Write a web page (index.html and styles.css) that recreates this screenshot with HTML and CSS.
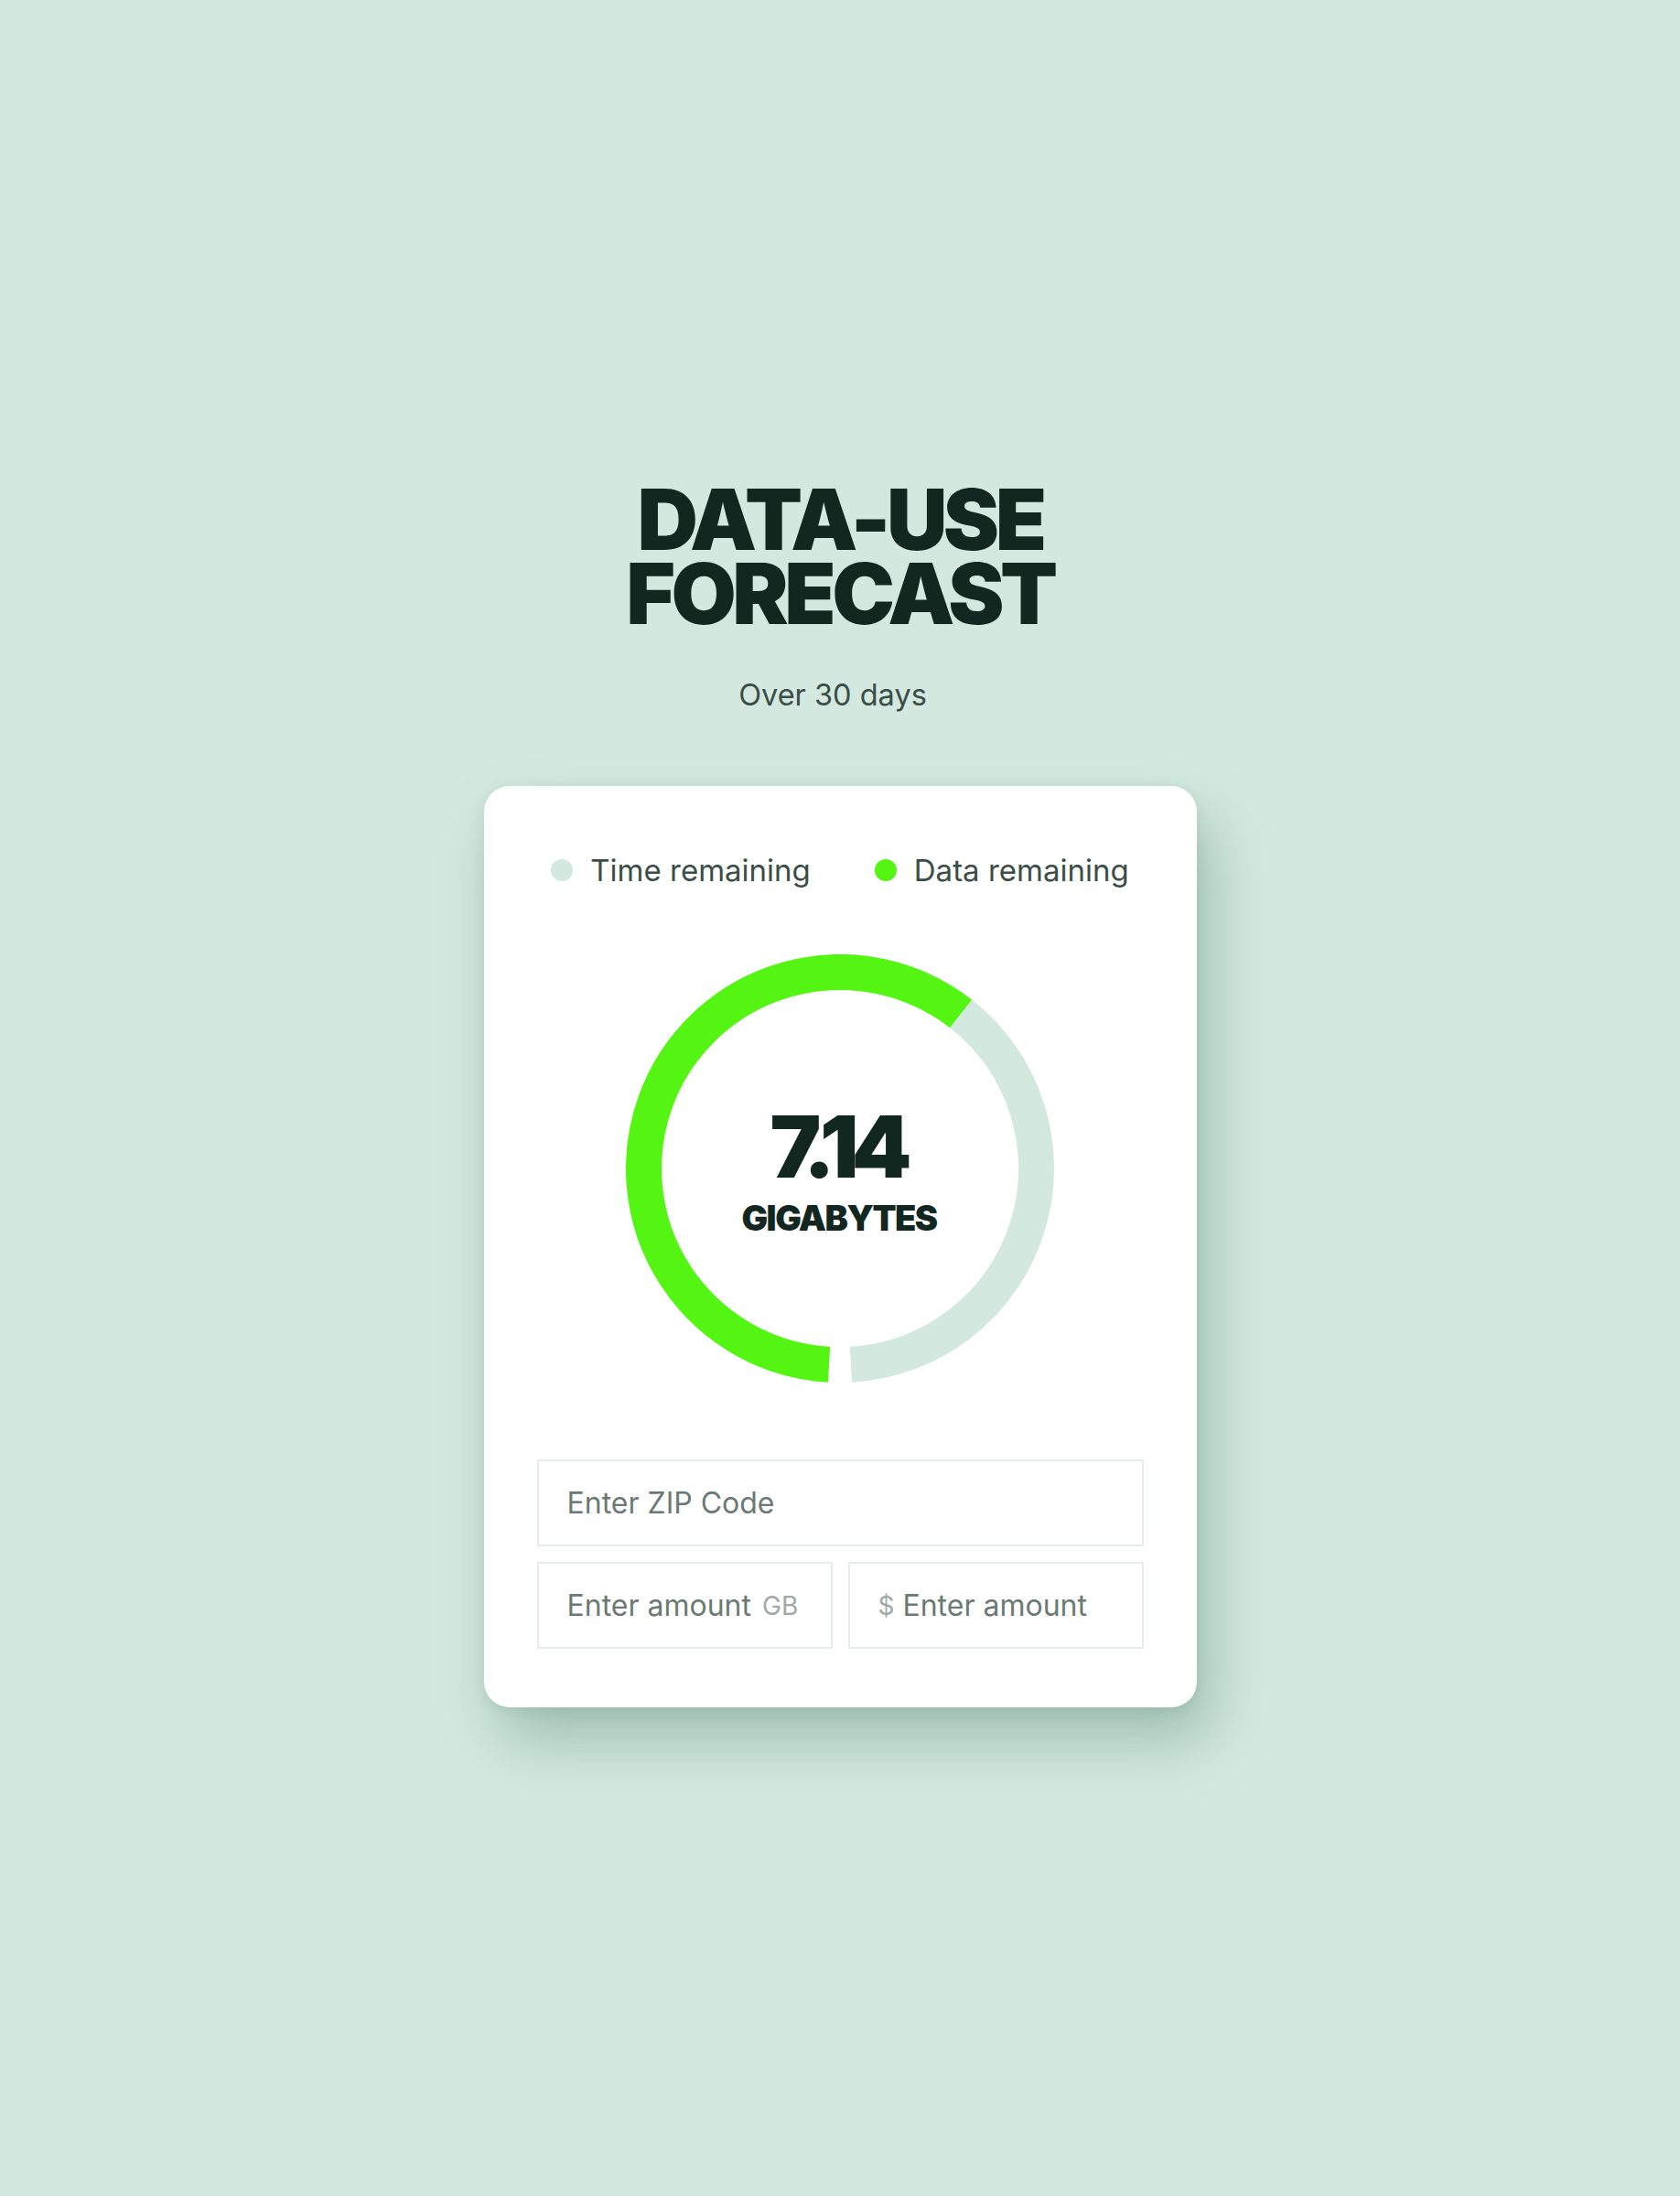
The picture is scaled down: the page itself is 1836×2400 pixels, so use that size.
FILE: index.html
```html
<!DOCTYPE html>
<html lang="en">
<head>
<meta charset="utf-8">
<title>Data-use forecast</title>
<link rel="stylesheet" href="styles.css">
</head>
<body>
<main class="page">
  <h1 class="title"><span class="title-line">DATA-USE</span><span class="title-line">FORECAST</span></h1>
  <p class="subtitle">Over 30 days</p>
  <section class="card">
    <ul class="legend">
      <li class="legend-item"><span class="dot dot-time"></span>Time remaining</li>
      <li class="legend-item"><span class="dot dot-data"></span>Data remaining</li>
    </ul>
    <div class="donut">
      <svg class="donut-svg" width="468" height="468" viewBox="0 0 468 468">
        <path class="arc-time" d="M366.06 64.97 A214.5 214.5 0 0 1 245.97 448.16"/>
        <path class="arc-data" d="M222.03 448.16 A214.5 214.5 0 1 1 366.06 64.97"/>
      </svg>
      <div class="donut-label">
        <div class="value">7.14</div>
        <div class="unit-label">GIGABYTES</div>
      </div>
    </div>
    <div class="form">
      <div class="field"><span class="placeholder">Enter ZIP Code</span></div>
      <div class="row">
        <div class="field"><span class="placeholder">Enter amount</span><span class="affix affix-after">GB</span></div>
        <div class="field"><span class="affix affix-before">$</span><span class="placeholder">Enter amount</span></div>
      </div>
    </div>
  </section>
</main>
</body>
</html>
```

FILE: styles.css
```css
* { box-sizing: border-box; }

html, body {
  margin: 0;
  padding: 0;
}

body {
  background: #d3e9df;
  font-family: Inter, "Noto Sans", sans-serif;
  color: #12271f;
  min-height: 2400px;
}

.page {
  display: flex;
  flex-direction: column;
  align-items: center;
  padding-top: 533px;
}

.title {
  margin: 0;
  display: flex;
  flex-direction: column;
  align-items: center;
  gap: 14px;
  font-family: Inter, sans-serif;
  font-weight: 900;
  font-size: 92px;
  letter-spacing: -4.5px;
  text-align: center;
  color: #11271f;
}

.title-line {
  display: block;
  line-height: 67px;
  height: 67px;
  padding-top: 1px;
}

.subtitle {
  margin: 59px 0 0;
  padding-right: 16px;
  font-size: 32.5px;
  line-height: 40px;
  font-weight: 400;
  color: #3b4d47;
}

.card {
  margin-top: 79px;
  width: 779px;
  background: #ffffff;
  border-radius: 28px;
  padding: 72px 58px 64px;
  box-shadow: 16px 36px 64px rgba(70, 120, 95, 0.36), 0 4px 14px rgba(70, 120, 95, 0.12);
  display: flex;
  flex-direction: column;
  align-items: center;
}

.legend {
  list-style: none;
  margin: 0;
  padding: 0;
  display: flex;
  gap: 70px;
}

.legend-item {
  display: flex;
  align-items: center;
  gap: 19px;
  font-size: 33px;
  line-height: 40px;
  color: #3b4d47;
}

.dot {
  width: 24px;
  height: 24px;
  border-radius: 50%;
}

.dot-time { background: #d3e9df; }
.dot-data { background: #54f512; }

.donut {
  position: relative;
  margin-top: 72px;
  width: 468px;
  height: 468px;
}

.donut-svg {
  display: block;
}

.arc-time, .arc-data {
  fill: none;
  stroke-width: 39;
  stroke-linecap: butt;
}

.arc-time { stroke: #d3e9df; }
.arc-data { stroke: #54f512; }

.donut-label {
  position: absolute;
  inset: 0;
  display: flex;
  flex-direction: column;
  align-items: center;
  justify-content: center;
  gap: 16px;
  padding-top: 8px;
}

.value {
  font-weight: 900;
  font-size: 94px;
  line-height: 84px;
  letter-spacing: -8px;
  color: #11271f;
  padding-right: 6px;
}

.unit-label {
  font-weight: 900;
  font-size: 38px;
  line-height: 40px;
  letter-spacing: -1.5px;
  color: #11271f;
  padding-right: 2px;
}

.form {
  margin-top: 84px;
  width: 100%;
  display: flex;
  flex-direction: column;
  gap: 17px;
}

.row {
  display: grid;
  grid-template-columns: 1fr 1fr;
  gap: 17px;
}

.field {
  height: 95px;
  border: 2px solid #e6ecea;
  display: flex;
  align-items: center;
  padding: 0 31px;
  font-size: 32px;
  color: #6a7a73;
  white-space: nowrap;
}

.affix {
  color: #9eaaa5;
}

.affix-after {
  font-size: 28px;
  margin-left: 12px;
}

.affix-before {
  font-size: 28px;
  margin-right: 9px;
}
```
